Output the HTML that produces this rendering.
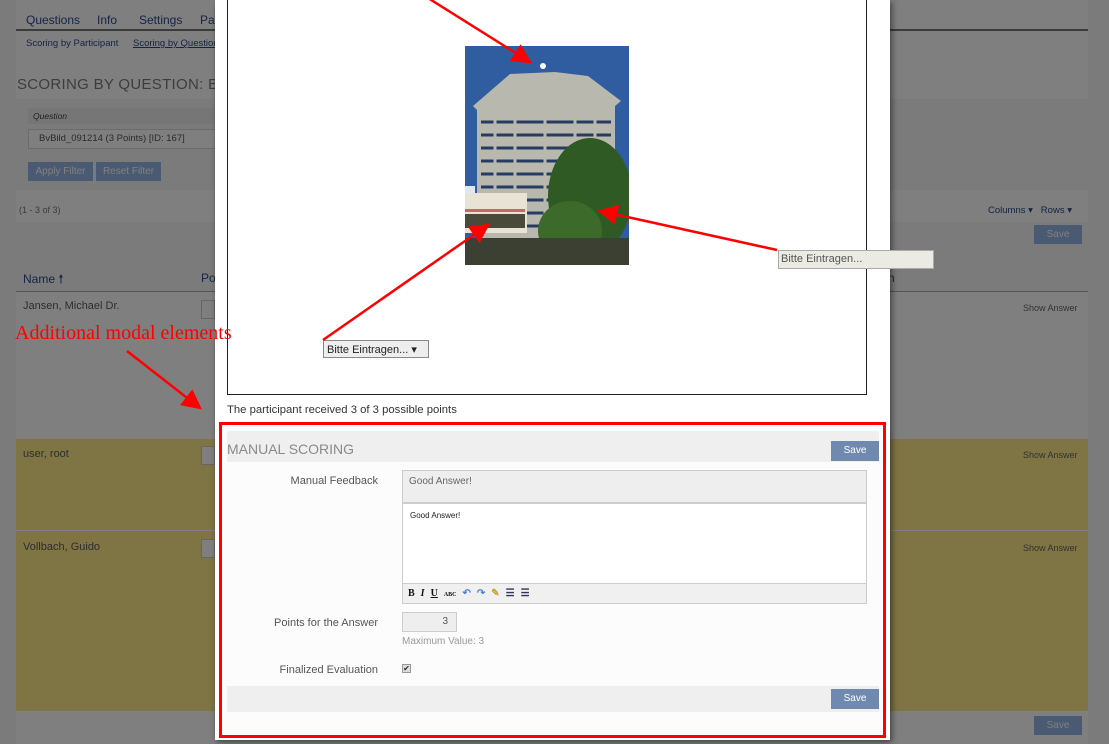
<!DOCTYPE html>
<html><head><meta charset="utf-8"><style>
*{box-sizing:border-box;margin:0;padding:0}
body{width:1109px;height:744px;overflow:hidden;background:#f6f6f6;font-family:"Liberation Sans",sans-serif;position:relative;color:#2b2b2b}
.a{position:absolute}
.t{font-size:11px;color:#5c5c5c}
.btn{position:absolute;background:#94b4e4;color:#fff;font-size:10px;text-align:center;line-height:19px}
.sa{position:absolute;font-size:9px;color:#666;left:1023px}
.inp{position:absolute;left:201px;width:14px;height:19px;border:1px solid #ccc;background:#fff}
.mb{position:absolute;background:#7089ae;color:#fff;font-size:10px;text-align:center;line-height:20px;width:48px}
.lbl{position:absolute;width:150px;left:228px;text-align:right;font-size:11px;color:#555}
.tb{display:inline-block;margin-right:6px}
</style></head><body>
<div class="a" style="left:16px;top:0;width:1072px;height:744px;background:#fff"></div>
<div class="a t" style="left:26px;top:13px;font-size:12px;color:#2a4a8a">Questions</div>
<div class="a t" style="left:97px;top:13px;font-size:12px;color:#2a4a8a">Info</div>
<div class="a t" style="left:139px;top:13px;font-size:12px;color:#2a4a8a">Settings</div>
<div class="a t" style="left:200px;top:13px;font-size:12px;color:#2a4a8a">Par</div>
<div class="a" style="left:16px;top:29px;width:1072px;height:2px;background:#777"></div>
<div class="a t" style="left:26px;top:38px;font-size:9.5px;color:#2a4a8a">Scoring by Participant</div>
<div class="a t" style="left:133px;top:38px;font-size:9.5px;color:#2a4a8a;text-decoration:underline">Scoring by Question</div>
<div class="a" style="left:17px;top:76px;font-size:15px;color:#7a7a7a;letter-spacing:.3px">SCORING BY QUESTION: BVB</div>
<div class="a" style="left:16px;top:99px;width:1072px;height:91px;background:#0b0b0b0b;background:#f6f6f6"></div>
<div class="a" style="left:28px;top:108px;width:200px;height:16px;background:#ececec"></div>
<div class="a" style="left:33px;top:111px;font-size:8.5px;font-style:italic;color:#444">Question</div>
<div class="a" style="left:28px;top:129px;width:200px;height:20px;border:1px solid #d6d6d6;background:#fff;font-size:9.5px;padding:3px 0 0 10px;color:#555">BvBild_091214 (3 Points) [ID: 167]</div>
<div class="btn" style="left:28px;top:162px;width:65px">Apply Filter</div>
<div class="btn" style="left:96px;top:162px;width:65px">Reset Filter</div>
<div class="a" style="left:19px;top:205px;font-size:9px;color:#777">(1 - 3 of 3)</div>
<div class="a" style="left:988px;top:205px;font-size:9.5px;color:#2a4a8a">Columns ▾ &nbsp; Rows ▾</div>
<div class="a" style="left:16px;top:222px;width:1072px;height:70px;background:#f6f6f6"></div>
<div class="btn" style="left:1034px;top:225px;width:48px">Save</div>
<div class="a" style="left:23px;top:270px;font-size:12px;color:#2a4a8a">Name 🠕</div>
<div class="a" style="left:201px;top:271px;font-size:12px;color:#2a4a8a">Po</div>
<div class="a" style="left:888px;top:271px;font-size:12px;color:#2a4a8a">n</div>
<div class="a" style="left:16px;top:291px;width:1072px;height:1px;background:#aaa"></div>
<div class="a" style="left:16px;top:292px;width:1072px;height:146px;background:#fff"></div>
<div class="a t" style="left:23px;top:300px">Jansen, Michael Dr.</div>
<div class="inp" style="top:300px"></div>
<div class="sa" style="top:303px">Show Answer</div>
<div class="a" style="left:16px;top:439px;width:1072px;height:91px;background:#fee886"></div>
<div class="a t" style="left:23px;top:448px">user, root</div>
<div class="inp" style="top:446px"></div>
<div class="sa" style="top:450px">Show Answer</div>
<div class="a" style="left:16px;top:531px;width:1072px;height:180px;background:#fee886"></div>
<div class="a t" style="left:23px;top:541px">Vollbach, Guido</div>
<div class="inp" style="top:539px"></div>
<div class="sa" style="top:543px">Show Answer</div>
<div class="btn" style="left:1034px;top:716px;width:48px">Save</div>
<!-- backdrop -->
<div class="a" style="left:0;top:0;width:1109px;height:744px;background:rgba(0,0,0,.5)"></div>

<div class="a" style="left:215px;top:0;width:675px;height:740px;background:#fff;box-shadow:2px 2px 6px rgba(0,0,0,.5)"></div>
<div class="a" style="left:227px;top:-2px;width:640px;height:397px;border:1px solid #222"></div>
<svg class="a" style="left:465px;top:46px" width="164" height="219" viewBox="0 0 164 219">
<rect width="164" height="219" fill="#2f5da0"/>
<rect x="0" y="140" width="10" height="40" fill="#dde8f0"/>
<rect x="150" y="130" width="14" height="40" fill="#dde8f0"/>
<path d="M8 60 L45 28 L90 26 L123 30 L156 55 L150 60 L150 200 L12 200 L12 64Z" fill="#b9b8ae"/>
<g stroke="#263d63" stroke-width="3">
<line x1="16" y1="76" x2="146" y2="76"/><line x1="16" y1="89" x2="146" y2="89"/><line x1="16" y1="102" x2="146" y2="102"/><line x1="16" y1="115" x2="146" y2="115"/><line x1="16" y1="128" x2="146" y2="128"/><line x1="16" y1="141" x2="146" y2="141"/><line x1="16" y1="154" x2="146" y2="154"/><line x1="16" y1="167" x2="146" y2="167"/><line x1="16" y1="180" x2="146" y2="180"/></g>
<g stroke="#b9b8ae" stroke-width="3"><line x1="30" y1="60" x2="30" y2="200"/><line x1="50" y1="40" x2="50" y2="200"/><line x1="80" y1="30" x2="80" y2="200"/><line x1="110" y1="35" x2="110" y2="200"/><line x1="130" y1="45" x2="130" y2="200"/></g>
<circle cx="78" cy="20" r="3" fill="#fff"/>
<rect x="0" y="147" width="62" height="40" fill="#e8e3d4"/>
<rect x="0" y="163" width="60" height="3" fill="#c66"/>
<rect x="0" y="168" width="60" height="14" fill="#4a4a3a"/>
<ellipse cx="125" cy="150" rx="42" ry="58" fill="#2f5a23"/>
<ellipse cx="105" cy="185" rx="32" ry="30" fill="#3b6a2b"/>
<rect x="0" y="192" width="164" height="27" fill="#3c4033"/>
</svg>
<div class="a" style="left:778px;top:250px;width:156px;height:19px;background:#ebebe4;border:1px solid #aaa;font-size:11px;color:#555;padding:2px 0 0 2px">Bitte Eintragen...</div>
<div class="a" style="left:323px;top:340px;width:106px;height:18px;background:#eee;border:1px solid #888;font-size:11px;color:#222;padding:2px 0 0 3px">Bitte Eintragen... ▾</div>
<div class="a" style="left:227px;top:404px;font-size:11.3px;color:#333">The participant received 3 of 3 possible points</div>

<div class="a" style="left:219px;top:422px;width:667px;height:316px;border:3px solid #f00;background:#fcfcfc"></div>
<div class="a" style="left:227px;top:431px;width:652px;height:31px;background:#efefef"></div>
<div class="a" style="left:227px;top:441px;font-size:14px;color:#8a8a8a">MANUAL SCORING</div>
<div class="mb" style="left:831px;top:441px">Save</div>
<div class="lbl" style="top:475px">Manual Feedback</div>
<div class="a" style="left:402px;top:470px;width:465px;height:33px;background:#eee;border:1px solid #ccc;font-size:10px;color:#666;padding:5px 6px">Good Answer!</div>
<div class="a" style="left:402px;top:503px;width:465px;height:101px;border:1px solid #ccc;background:#fff;font-size:8px;color:#222;padding:7px 7px">Good Answer!</div>
<div class="a" style="left:403px;top:583px;width:463px;height:20px;background:#f0f0f0;border-top:1px solid #ccc;font-size:10px;padding:4px 5px;color:#111;font-weight:bold;white-space:nowrap;font-family:'Liberation Serif',serif"><span class="tb">B</span><span class="tb"><i>I</i></span><span class="tb"><u>U</u></span><span class="tb" style="font-size:6px">ABC</span><span class="tb" style="color:#4a7fd0">↶</span><span class="tb" style="color:#4a7fd0">↷</span><span class="tb" style="color:#c9a43a">✎</span><span class="tb" style="color:#335">☰</span><span class="tb" style="color:#335">☰</span></div>
<div class="lbl" style="top:617px">Points for the Answer</div>
<div class="a" style="left:402px;top:612px;width:55px;height:20px;background:#eee;border:1px solid #ccc;font-size:10px;color:#555;text-align:right;padding:3px 8px">3</div>
<div class="a" style="left:402px;top:636px;font-size:10px;color:#999">Maximum Value: 3</div>
<div class="lbl" style="top:664px">Finalized Evaluation</div>
<div class="a" style="left:402px;top:664px;width:9px;height:9px;background:#ddd;border:1px solid #999;font-size:8px;line-height:8px;text-align:center">✔</div>
<div class="a" style="left:227px;top:686px;width:652px;height:26px;background:#efefef"></div>
<div class="mb" style="left:831px;top:689px">Save</div>

<div class="a" style="left:15px;top:322px;font-family:'Liberation Serif',serif;font-size:20px;color:#f00;white-space:nowrap">Additional modal elements</div>
<svg class="a" style="left:0;top:0" width="1109" height="744">
<defs><marker id="m" markerWidth="8" markerHeight="8" refX="7" refY="4" orient="auto" markerUnits="strokeWidth"><path d="M0,0 L8,4 L0,8Z" fill="#f00"/></marker></defs>
<g stroke="#f00" stroke-width="2.5" fill="none" marker-end="url(#m)">
<line x1="428" y1="-2" x2="530" y2="62"/>
<line x1="777" y1="250" x2="600" y2="211"/>
<line x1="323" y1="340" x2="488" y2="225"/>
<line x1="127" y1="351" x2="200" y2="408"/>
</g></svg>
</body></html>
